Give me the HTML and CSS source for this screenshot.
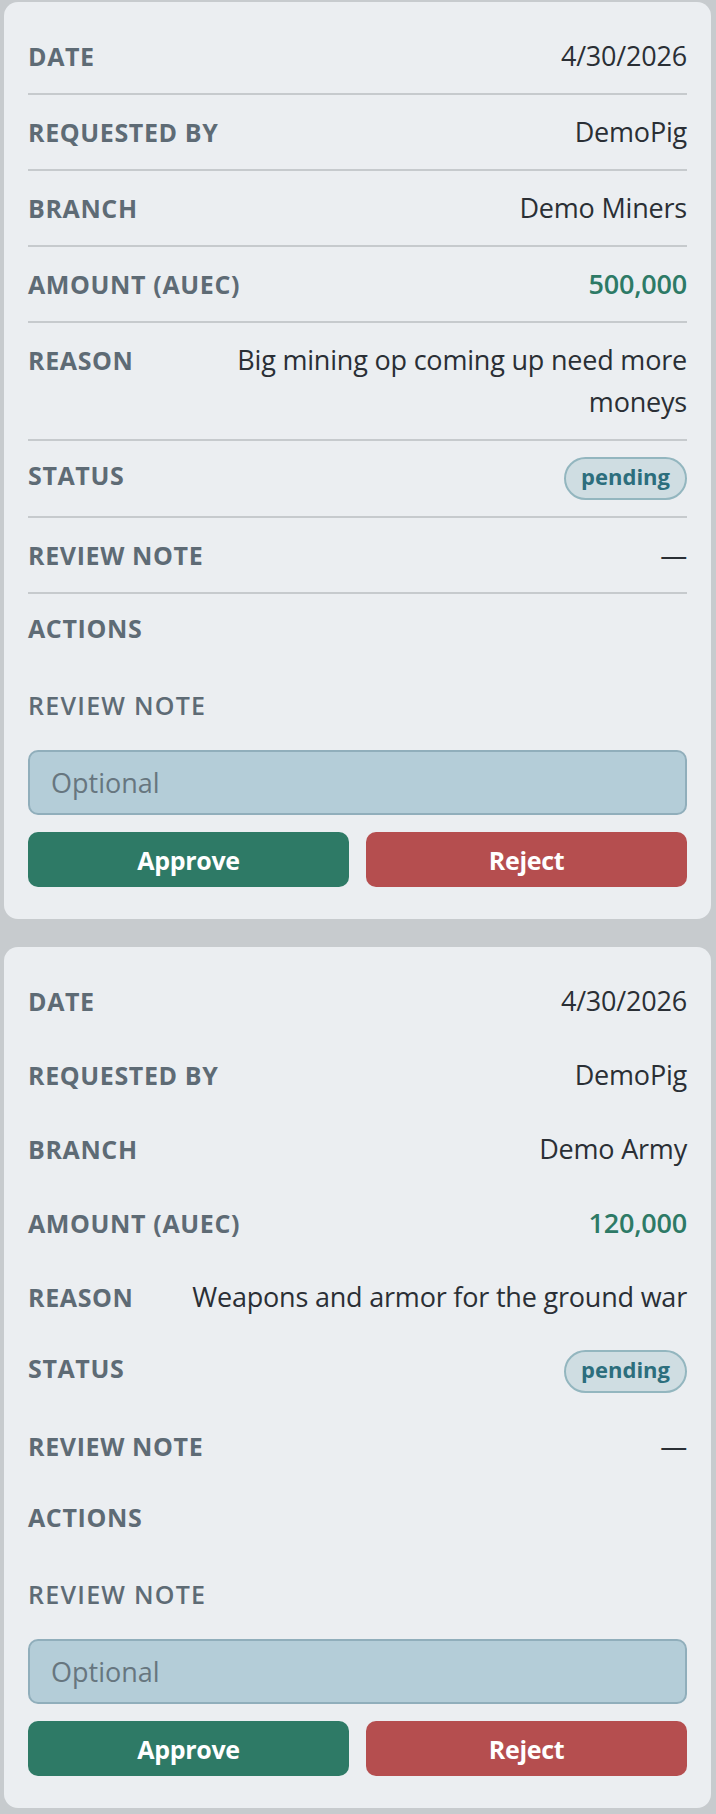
FILE: index.html
```html
<!DOCTYPE html>
<html lang="en">
<head>
<meta charset="utf-8">
<title>Requests</title>
<link rel="stylesheet" href="styles.css">
</head>
<body>
<main class="list">
  <article class="card lined">
    <div class="row"><span class="label">Date</span><span class="value">4/30/2026</span></div>
    <div class="row"><span class="label">Requested By</span><span class="value">DemoPig</span></div>
    <div class="row"><span class="label">Branch</span><span class="value">Demo Miners</span></div>
    <div class="row"><span class="label">Amount (aUEC)</span><span class="value amount">500,000</span></div>
    <div class="row"><span class="label">Reason</span><span class="value">Big mining op coming up need more moneys</span></div>
    <div class="row status-row"><span class="label">Status</span><span class="badge">pending</span></div>
    <div class="row"><span class="label">Review Note</span><span class="value">—</span></div>
    <div class="actions">
      <span class="label">Actions</span>
      <form class="review-form">
        <label class="field-label">Review Note</label>
        <input class="note-input" type="text" placeholder="Optional">
        <div class="buttons">
          <button type="button" class="btn approve">Approve</button>
          <button type="button" class="btn reject">Reject</button>
        </div>
      </form>
    </div>
  </article>
  <article class="card">
    <div class="row"><span class="label">Date</span><span class="value">4/30/2026</span></div>
    <div class="row"><span class="label">Requested By</span><span class="value">DemoPig</span></div>
    <div class="row"><span class="label">Branch</span><span class="value">Demo Army</span></div>
    <div class="row"><span class="label">Amount (aUEC)</span><span class="value amount">120,000</span></div>
    <div class="row"><span class="label">Reason</span><span class="value">Weapons and armor for the ground war</span></div>
    <div class="row status-row"><span class="label">Status</span><span class="badge">pending</span></div>
    <div class="row"><span class="label">Review Note</span><span class="value">—</span></div>
    <div class="actions">
      <span class="label">Actions</span>
      <form class="review-form">
        <label class="field-label">Review Note</label>
        <input class="note-input" type="text" placeholder="Optional">
        <div class="buttons">
          <button type="button" class="btn approve">Approve</button>
          <button type="button" class="btn reject">Reject</button>
        </div>
      </form>
    </div>
  </article>
</main>
</body>
</html>
```
FILE: styles.css
```css
* { box-sizing: border-box; }

html, body {
  margin: 0;
  background: #c7cbce;
}

body {
  padding: 2px 5px 4px 4px;
  font-family: "Open Sans", "Noto Sans", "Liberation Sans", sans-serif;
  color: #2a2f35;
}

.list {
  display: flex;
  flex-direction: column;
  gap: 28px;
}

.card {
  background: #ebeef1;
  border-radius: 14px;
  padding: 17px 24px 32px;
}

.row {
  display: flex;
  justify-content: space-between;
  align-items: baseline;
  gap: 16px;
  padding: 16px 0;
  line-height: 42px;
}

.lined .row {
  border-bottom: 2px solid #c6cacd;
}

.status-row .label {
  line-height: 36px;
}

.label {
  flex-shrink: 0;
  font-size: 25px;
  font-weight: 700;
  letter-spacing: 0.025em;
  text-transform: uppercase;
  color: #5e6b75;
}

.value {
  font-size: 27px;
  letter-spacing: -0.2px;
  text-align: right;
  color: #2a2f35;
}

.amount {
  font-weight: 600;
  color: #2d7a66;
}

.badge {
  display: inline-block;
  font-size: 22px;
  font-weight: 700;
  line-height: 28px;
  padding: 3px 15px 8px;
  border: 2px solid #93b6bf;
  border-radius: 999px;
  background: #cfdde2;
  color: #2c6e7d;
}

.actions {
  padding-top: 16px;
}

.actions > .label {
  display: block;
  line-height: 36px;
}

.review-form {
  display: flex;
  flex-direction: column;
  margin-top: 40px;
}

.field-label {
  font-size: 25px;
  font-weight: 600;
  letter-spacing: 0.05em;
  line-height: 38px;
  text-transform: uppercase;
  color: #5e6b75;
}

.note-input {
  margin-top: 26px;
  height: 65px;
  padding: 0 21px;
  border: 2px solid #90aebb;
  border-radius: 10px;
  background: #b4cdd8;
  font-family: inherit;
  font-size: 27px;
  color: #2a2f35;
  outline: none;
}

.note-input::placeholder {
  color: #67767f;
}

.buttons {
  display: grid;
  grid-template-columns: 1fr 1fr;
  gap: 17px;
  margin-top: 17px;
}

.btn {
  height: 55px;
  border: none;
  border-radius: 10px;
  font-family: inherit;
  font-size: 25px;
  font-weight: 700;
  letter-spacing: -0.3px;
  color: #ffffff;
}

.approve { background: #2e7a66; }
.reject { background: #b54e4f; }
```
